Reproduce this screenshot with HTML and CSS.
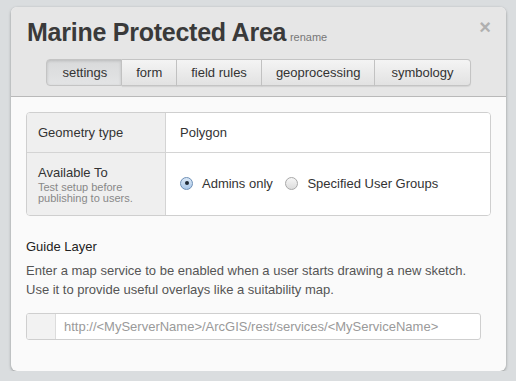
FILE: index.html
```html
<!DOCTYPE html>
<html lang="en">
<head>
    <meta charset="UTF-8">
    <title>Marine Protected Area</title>
    <link rel="stylesheet" href="styles.css">
</head>
<body>

<div class="modal">
    <div class="modal-header">
        <span class="close">&times;</span>
        <h1>Marine Protected Area <a class="rename" href="#">rename</a></h1>
        <div class="tabs">
            <span class="tab active">settings</span>
            <span class="tab">form</span>
            <span class="tab">field rules</span>
            <span class="tab">geoprocessing</span>
            <span class="tab">symbology</span>
        </div>
    </div>

    <div class="modal-body">
        <table class="props">
            <tr class="row-geometry">
                <th>Geometry type</th>
                <td>Polygon</td>
            </tr>
            <tr class="row-access">
                <th>
                    Available To
                    <span class="hint">Test setup before publishing to users.</span>
                </th>
                <td>
                    <label class="radio"><span class="dot checked"></span>Admins only</label>
                    <label class="radio"><span class="dot"></span>Specified User Groups</label>
                </td>
            </tr>
        </table>

        <h3>Guide Layer</h3>
        <p class="help">Enter a map service to be enabled when a user starts drawing a new sketch.<br>Use it to provide useful overlays like a suitability map.</p>

        <div class="input-group">
            <span class="addon"></span>
            <input type="text" placeholder="http://&lt;MyServerName&gt;/ArcGIS/rest/services/&lt;MyServiceName&gt;">
        </div>
    </div>
</div>

</body>
</html>
```

FILE: styles.css
```css
/* General Styles */
body {
    font-family: "Liberation Sans", Arial, sans-serif;
    background-color: #dadddf;
    margin: 0;
    padding: 7px 0 0 11px;
    color: #333;
}

.modal {
    width: 495px;
    height: 364px;
    background-color: #fafafa;
    border-radius: 6px;
    box-shadow: 0 1px 3px rgba(0, 0, 0, 0.35);
    overflow: hidden;
}

/* Header */
.modal-header {
    position: relative;
    background-color: #e6e6e6;
    padding: 11px 16px 0;
    height: 78px;
    border-bottom: 1px solid #b9b9b9;
}

.modal-header h1 {
    margin: 0;
    font-size: 25px;
    line-height: 28px;
    font-weight: bold;
    color: #3a3a3a;
    letter-spacing: -0.25px;
}

.rename {
    font-size: 11px;
    line-height: 1;
    font-weight: normal;
    letter-spacing: 0;
    color: #777;
    text-decoration: none;
    margin-left: -3px;
}

.close {
    position: absolute;
    top: 9px;
    right: 15px;
    font-size: 20px;
    font-weight: bold;
    color: #b0b0b0;
}

.tabs {
    display: flex;
    justify-content: center;
    margin-top: 13px;
}

.tab {
    height: 25px;
    line-height: 25px;
    padding: 0 14px;
    font-size: 13px;
    color: #333;
    background: linear-gradient(#f4f4f4, #e2e2e2);
    border: 1px solid #c4c4c4;
    border-left: none;
    box-shadow: 0 1px 1px rgba(0, 0, 0, 0.08);
}

.tab:first-child {
    border-left: 1px solid #c4c4c4;
    border-radius: 4px 0 0 4px;
    padding: 0 14px 0 15px;
}

.tab:last-child {
    border-radius: 0 4px 4px 0;
    padding: 0 16px;
}

.tab.active {
    background: linear-gradient(#d9dadb, #e3e4e5);
    box-shadow: inset 0 1px 3px rgba(0, 0, 0, 0.15);
}

/* Body */
.modal-body {
    padding: 15px 15px 0;
}

table.props {
    width: 465px;
    border-collapse: separate;
    border-spacing: 0;
    border: 1px solid #cfcfcf;
    border-radius: 4px;
    overflow: hidden;
    font-size: 13px;
}

table.props th {
    width: 116px;
    text-align: left;
    font-weight: normal;
    background-color: #efefef;
    border-right: 1px solid #d4d4d4;
    padding: 0 11px;
    vertical-align: middle;
}

table.props td {
    background-color: #fff;
    padding: 0 14px;
}

.row-geometry th, .row-geometry td {
    height: 39px;
    border-bottom: 1px solid #d4d4d4;
}

.row-access th, .row-access td {
    height: 62px;
}

.row-access th {
    line-height: 16px;
}

.hint {
    display: block;
    margin-top: 1px;
    font-size: 11px;
    line-height: 11px;
    color: #888;
    width: 100px;
}

.radio {
    display: inline-flex;
    align-items: center;
    margin-right: 9px;
}

.dot {
    display: inline-block;
    width: 11px;
    height: 11px;
    border-radius: 50%;
    border: 1px solid #a8a8a8;
    background: linear-gradient(#f6f6f6, #dcdcdc);
    margin-right: 9px;
    position: relative;
}

.dot.checked {
    border-color: #6d8fb6;
    background: linear-gradient(#dbe8f6, #a9c7e8);
}

.dot.checked::after {
    content: "";
    position: absolute;
    left: 3.5px;
    top: 3.5px;
    width: 4px;
    height: 4px;
    border-radius: 50%;
    background-color: #1f2a36;
}

h3 {
    margin: 22px 0 0;
    font-size: 13px;
    font-weight: normal;
    line-height: 18px;
    color: #222;
}

.help {
    margin: 5px 0 0;
    font-size: 13px;
    line-height: 19px;
    color: #555;
}

.input-group {
    display: flex;
    width: 455px;
    height: 27px;
    margin-top: 14px;
    border: 1px solid #cfcfcf;
    border-radius: 3px;
    box-sizing: border-box;
    background-color: #fff;
    overflow: hidden;
}

.addon {
    width: 28px;
    background-color: #f2f2f2;
    border-right: 1px solid #dcdcdc;
}

.input-group input {
    flex: 1;
    border: none;
    outline: none;
    padding: 0 8px;
    font-family: "Liberation Sans", Arial, sans-serif;
    font-size: 13px;
    color: #555;
    background: transparent;
}

.input-group input::placeholder {
    color: #9a9a9a;
}
```
